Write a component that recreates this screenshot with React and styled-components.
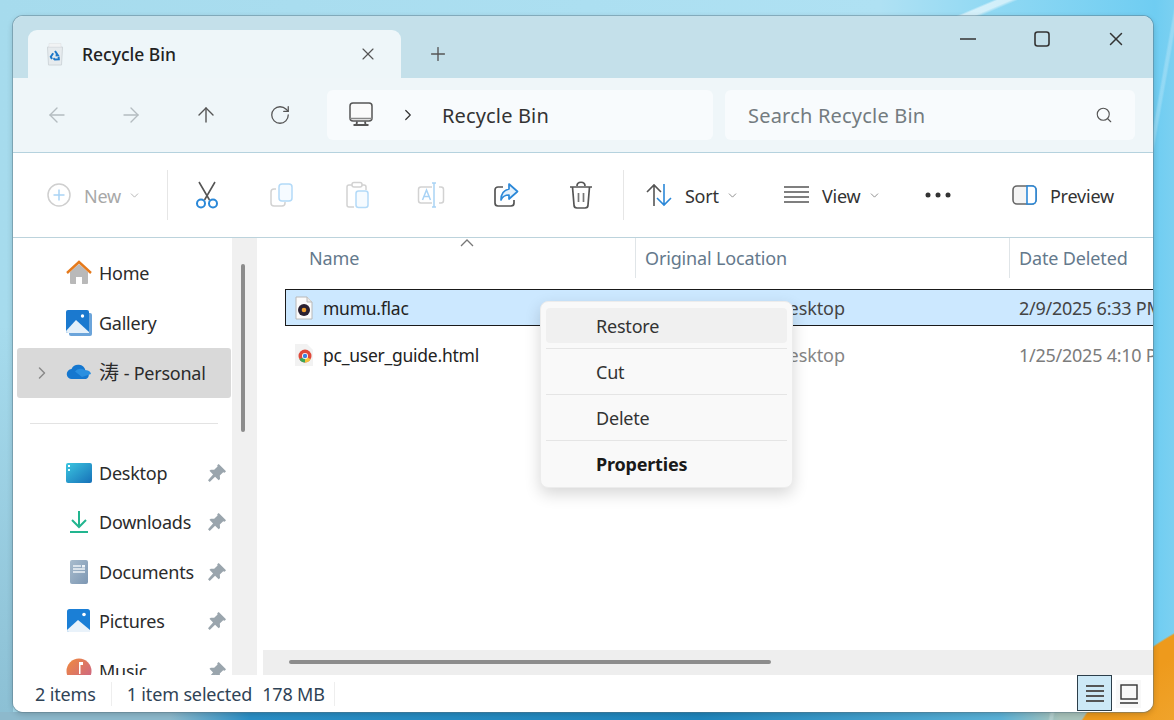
import React from 'react';
import styled, { createGlobalStyle } from 'styled-components';
import {
  ArrowLeft,
  ArrowRight,
  ArrowUp,
  ChevronDown,
  ChevronRight,
  Plus,
  RotateCw,
  Search,
  X
} from 'lucide-react';

const GlobalStyle = createGlobalStyle`
  html, body {
    margin: 0;
    padding: 0;
  }
  body {
    font-family: "Noto Sans", "Open Sans", "Noto Sans CJK SC", sans-serif;
    color: #1f1f1f;
  }
  * {
    box-sizing: border-box;
  }
`;

const Desktop = styled.div`
  width: 1174px;
  height: 720px;
  overflow: hidden;
  padding: 16px 21px 8px 13px;
  background:
    linear-gradient(157deg, transparent 388px, rgba(255, 255, 255, 0.6) 390px 395px, transparent 398px) top / 100% 16px no-repeat,
    linear-gradient(100deg, transparent 1157px, rgba(255, 255, 255, 0.22) 1159px 1161px, transparent 1163px) right / 100% 100% no-repeat,
    radial-gradient(circle at 1300px 860px, #f7c662 0, #ee9a1c 240px, #ee9a1c 258px, rgba(238, 154, 28, 0) 260px),
    linear-gradient(90deg, #8db9cc 0 170px, #2a8fc6 250px, #1f86bd 700px, #5bb2d8 1000px, #a9c4bc 1060px) bottom / 100% 8px no-repeat,
    linear-gradient(180deg, transparent 45%, rgba(90, 140, 165, 0.35) 100%) left / 13px 100% no-repeat,
    linear-gradient(90deg, #a6dbed 0, #afe1f3 880px, #8ed8f3 1000px, #6fcdf2 1155px, #7bd0f1 100%);
`;

const Window = styled.div`
  position: relative;
  width: 1140px;
  height: 696px;
  border-radius: 10px;
  overflow: hidden;
  display: flex;
  flex-direction: column;
  background: #fff;
  box-shadow: 0 0 0 1px rgba(90, 120, 135, 0.45), 0 2px 6px rgba(0, 0, 0, 0.2);
`;

const TitleBar = styled.div`
  height: 62px;
  flex: none;
  display: flex;
  align-items: flex-end;
  padding-left: 15px;
  background: #c4e0ea;
`;

const Tab = styled.div`
  width: 373px;
  height: 48px;
  display: flex;
  align-items: center;
  padding: 0 23px 0 18px;
  background: #eef6f9;
  border-radius: 9px 9px 0 0;
  font-size: 17.5px;
  font-weight: 500;
  color: #222;
`;

const TabTitle = styled.span`
  margin-left: 18px;
  flex: 1;
`;

const NewTab = styled.div`
  width: 74px;
  height: 48px;
  display: flex;
  align-items: center;
  justify-content: center;
  color: #555;
`;

const WindowControls = styled.div`
  margin-left: auto;
  align-self: flex-start;
  display: flex;
`;

const WindowControl = styled.div`
  width: 74px;
  height: 46px;
  display: flex;
  align-items: center;
  justify-content: center;
  color: #333;
`;

const AddressRow = styled.div`
  height: 75px;
  flex: none;
  display: flex;
  align-items: flex-start;
  padding: 12px 0 0 7px;
  background: #eff6f9;
  border-bottom: 1px solid #b5d2de;
`;

const NavButton = styled.div`
  width: 74.25px;
  height: 50px;
  display: flex;
  align-items: center;
  justify-content: center;
  color: ${(p) => (p.$off ? '#b4bcc0' : '#555')};
`;

const AddressBox = styled.div`
  margin-left: 10px;
  width: 386px;
  height: 50px;
  display: flex;
  align-items: center;
  padding-left: 22px;
  background: #f8fbfd;
  border-radius: 6px;
  font-size: 20px;
  letter-spacing: 0.15px;
  color: #333;
`;

const CrumbArrow = styled.div`
  margin-left: 26px;
  display: flex;
`;

const Crumb = styled.span`
  margin-left: 25px;
`;

const SearchBox = styled.div`
  margin-left: 12px;
  width: 410px;
  height: 50px;
  display: flex;
  align-items: center;
  justify-content: space-between;
  padding: 0 22px 0 23px;
  background: #f8fbfd;
  border-radius: 6px;
  font-size: 20px;
  letter-spacing: 0.2px;
  color: #737b80;
`;

const Toolbar = styled.div`
  height: 85px;
  flex: none;
  display: flex;
  align-items: center;
  padding-left: 34px;
  background: #fff;
  border-bottom: 1px solid #bcd3dc;
  font-size: 18px;
  letter-spacing: -0.2px;
  color: #333;
`;

const ToolGroup = styled.div`
  width: ${(p) => p.$width}px;
  flex: none;
  display: flex;
  align-items: center;
  color: ${(p) => (p.$off ? '#a8a8a8' : 'inherit')};
  svg {
    flex: none;
  }
`;

const ToolLabel = styled.span`
  margin: 0 7px 0 13px;
  padding-top: 2px;
`;

const ToolDivider = styled.div`
  width: 1px;
  height: 50px;
  flex: none;
  background: #e6e6e6;
  margin: 0 ${(p) => p.$right}px 0 ${(p) => p.$left}px;
`;

const ToolButton = styled.div`
  width: 74.7px;
  flex: none;
  display: flex;
  justify-content: center;
`;

const Body = styled.div`
  flex: 1;
  min-height: 0;
  display: flex;
`;

const Sidebar = styled.nav`
  width: 219px;
  flex: none;
  padding: 10px 0 0 4px;
  overflow: hidden;
`;

const NavRow = styled.div`
  width: 214px;
  height: ${(p) => (p.$tight ? 49.5 : 50)}px;
  display: flex;
  align-items: center;
  padding-right: 5px;
  border-radius: 3px;
  background: ${(p) => (p.$active ? '#d9d9d9' : 'transparent')};
  font-size: 18px;
  letter-spacing: -0.25px;
  color: #2b2b2b;
`;

const Expander = styled.div`
  width: 13px;
  flex: none;
  margin: 0 18px;
  display: flex;
  justify-content: center;
  color: #8a8a8a;
  svg {
    flex: none;
  }
`;

const NavIcon = styled.div`
  width: 26px;
  height: 26px;
  flex: none;
  margin-right: 7px;
  display: flex;
  align-items: center;
`;

const CjkName = styled.span`
  font-size: 20px;
  line-height: 1;
  margin-right: 5px;
`;

const Pin = styled.div`
  margin-left: auto;
  width: 18px;
  height: 18px;
  display: flex;
`;

const NavDivider = styled.div`
  height: 50px;
  display: flex;
  align-items: center;
  padding: 0 14px 0 13px;
  &::after {
    content: '';
    flex: 1;
    height: 1px;
    background: #e3e3e3;
  }
`;

const ScrollTrack = styled.div`
  width: 25px;
  flex: none;
  padding: 26px 0 0 9px;
  background: #f0f0f0;
`;

const ScrollThumb = styled.div`
  width: 4px;
  height: 168px;
  border-radius: 2px;
  background: #8c8c8c;
`;

const Main = styled.div`
  flex: 1;
  min-width: 0;
  display: flex;
  flex-direction: column;
  overflow: hidden;
  font-size: 17.5px;
  letter-spacing: -0.25px;
`;

const HeaderRow = styled.div`
  position: relative;
  height: 40px;
  flex: none;
  display: flex;
  font-size: 18px;
  letter-spacing: -0.15px;
  color: #64798c;
`;

const HeaderCell = styled.div`
  width: ${(p) => p.$width}px;
  flex: none;
  display: flex;
  align-items: center;
  padding-left: ${(p) => p.$pad}px;
  border-right: ${(p) => (p.$last ? 'none' : '1px solid #e0e5e8')};
  white-space: nowrap;
`;

const SortCaret = styled.svg`
  position: absolute;
  left: 203px;
  top: 1px;
`;

const FileRow = styled.div`
  margin: ${(p) => (p.$selected ? 11 : 10)}px 0 0 28px;
  width: 868px;
  height: 37px;
  flex: none;
  display: flex;
  align-items: center;
  white-space: nowrap;
  overflow: hidden;
  background: ${(p) => (p.$selected ? '#cce8ff' : 'transparent')};
  border: ${(p) => (p.$selected ? '1px solid #1a1a1a' : '1px solid transparent')};
  border-right: none;
`;

const FileName = styled.div`
  width: 359px;
  flex: none;
  display: flex;
  align-items: center;
  gap: 9px;
  padding-left: 8px;
  color: #222;
`;

const FileLocation = styled.div`
  width: 374px;
  flex: none;
  font-size: 18px;
  letter-spacing: -0.1px;
  color: ${(p) => (p.$muted ? '#858585' : '#444')};
`;

const FileDate = styled.div`
  flex: none;
  font-size: 18px;
  color: ${(p) => (p.$muted ? '#7c7c7c' : '#444')};
`;

const HScroll = styled.div`
  margin: auto 0 0 6px;
  height: 25px;
  flex: none;
  padding: 10px 0 0 26px;
  background: #eeeeee;
`;

const HThumb = styled.div`
  width: 482px;
  height: 3.5px;
  border-radius: 2px;
  background: #8c8c8c;
`;

const StatusBar = styled.div`
  height: 37px;
  flex: none;
  display: flex;
  align-items: center;
  padding: 0 12px 0 22px;
  font-size: 18px;
  letter-spacing: -0.15px;
  color: #2f4356;
  background: #fff;
`;

const StatusText = styled.span`
  margin-left: ${(p) => p.$gap || 0}px;
`;

const StatusDivider = styled.div`
  width: 1px;
  height: 24px;
  background: #eeeeee;
  margin: 0 ${(p) => p.$right}px 0 ${(p) => p.$left}px;
`;

const ViewButtons = styled.div`
  margin-left: auto;
  align-self: flex-start;
  display: flex;
  align-items: flex-start;
  gap: 4px;
`;

const ViewButton = styled.div`
  width: ${(p) => (p.$active ? 35 : 25)}px;
  height: ${(p) => (p.$active ? 36 : 28)}px;
  margin-top: ${(p) => (p.$active ? 0 : 5)}px;
  display: flex;
  align-items: center;
  justify-content: center;
  background: ${(p) => (p.$active ? '#cce8f6' : '#f8f8f8')};
  border: ${(p) => (p.$active ? '1px solid #2c3e4a' : 'none')};
`;

const ContextMenu = styled.div`
  position: absolute;
  left: 527px;
  top: 285px;
  width: 253px;
  height: 187px;
  padding: 6px 5px;
  background: #f9f9f9;
  border: 1px solid #ececec;
  border-radius: 8px;
  box-shadow: 0 6px 16px rgba(0, 0, 0, 0.16);
  font-size: 18px;
  letter-spacing: -0.2px;
  color: #333;
`;

const MenuItem = styled.div`
  height: 35px;
  display: flex;
  align-items: center;
  padding-left: 50px;
  border-radius: 4px;
  background: ${(p) => (p.$hover ? '#f0f0f0' : 'transparent')};
  font-weight: ${(p) => (p.$strong ? 700 : 400)};
  color: ${(p) => (p.$strong ? '#1a1a1a' : '#333')};
`;

const MenuDivider = styled.div`
  height: 1px;
  margin: 5px 0;
  background: #e5e5e5;
`;

const RecycleIcon = () => (
  <svg width="18" height="24" viewBox="0 0 18 24">
    <path d="M1.500 5h15l-1 18h-13z" fill="#e6ebee" stroke="#cfd6da" />
    <path d="M3 1.500h12v3.500H3z" fill="#f1f3f4" stroke="#dfe3e5" strokeWidth="0.6" />
    <path d="M9 9l2.800 4.200-2.200.2M6 17l-1.200-2.200 2.400-3.600M12.600 14.600l.2 2.600-4 .2-1.400-1.200" fill="none" stroke="#1e78c8" strokeWidth="2" />
  </svg>
);

const MonitorIcon = () => (
  <svg width="24" height="26" viewBox="0 0 24 26" fill="none" stroke="#555" strokeWidth="1.5">
    <rect x="1" y="1" width="22" height="18" rx="3" fill="#fafafa" />
    <path d="M1 16.500h22" stroke="#888" />
    <path d="M8 19.500l-.5 3M16 19.500l.5 3M4.500 23h15" strokeWidth="1.800" />
  </svg>
);

const NewIcon = () => (
  <svg width="24" height="24" viewBox="0 0 24 24" fill="none">
    <circle cx="12" cy="12" r="11" stroke="#cfcfcf" strokeWidth="1.500" />
    <path d="M12 6.500v11M6.500 12h11" stroke="#a9d3f5" strokeWidth="1.500" />
  </svg>
);

const CutIcon = () => (
  <svg width="24" height="28" viewBox="0 0 24 28" fill="none" strokeWidth="1.600">
    <path d="M4 1l10.500 18M20 1L9.500 19" stroke="#555" />
    <circle cx="6" cy="22.500" r="4" stroke="#2b88d8" strokeWidth="2" />
    <circle cx="18" cy="22.500" r="4" stroke="#2b88d8" strokeWidth="2" />
  </svg>
);

const CopyIcon = () => (
  <svg width="26" height="26" viewBox="0 0 26 26" fill="none" strokeWidth="1.500">
    <path d="M7 7H5a3 3 0 0 0-3 3v11a3 3 0 0 0 3 3h8a3 3 0 0 0 3-3v-1" stroke="#d2d2d2" />
    <rect x="10" y="2" width="13" height="17" rx="3" stroke="#b3daf8" fill="#f6fbff" />
  </svg>
);

const PasteIcon = () => (
  <svg width="26" height="28" viewBox="0 0 26 28" fill="none" strokeWidth="1.500">
    <path d="M8 4H5a2 2 0 0 0-2 2v18a2 2 0 0 0 2 2h5M18 4h2a2 2 0 0 1 2 2v3" stroke="#d2d2d2" />
    <rect x="8" y="1.500" width="10" height="4.500" rx="2" stroke="#d2d2d2" />
    <rect x="12" y="10" width="12" height="16.500" rx="2.500" stroke="#b3daf8" fill="#f6fbff" />
  </svg>
);

const RenameIcon = () => (
  <svg width="28" height="28" viewBox="0 0 28 28" fill="none" strokeWidth="1.500">
    <path d="M15 6H4a2.500 2.500 0 0 0-2.500 2.500v11A2.500 2.500 0 0 0 4 22h11M22 6h2a2.500 2.500 0 0 1 2.500 2.500v11A2.500 2.500 0 0 1 24 22h-2" stroke="#d2d2d2" />
    <path d="M15 2h4M15 26h4M17 2v24" stroke="#a9d3f5" />
    <path d="M5.500 19l4-10 4 10M7 15.500h5" stroke="#a9d3f5" />
  </svg>
);

const ShareIcon = () => (
  <svg width="26" height="26" viewBox="0 0 26 26" fill="none" strokeWidth="1.700">
    <path d="M10 5H5a3 3 0 0 0-3 3v13a3 3 0 0 0 3 3h13a3 3 0 0 0 3-3v-3" stroke="#555" />
    <path d="M16 2l8.500 7.500L16 17v-4c-4 0-6.500 1.500-8 5 0-6 3-10 8-11z" stroke="#2b88d8" fill="#e4f1fc" strokeLinejoin="round" />
  </svg>
);

const TrashIcon = () => (
  <svg width="24" height="28" viewBox="0 0 24 28" fill="none" stroke="#555" strokeWidth="1.700">
    <path d="M1 6h22M8 5c0-5 8-5 8 0" />
    <path d="M3.500 6l1.500 18a3 3 0 0 0 3 3h8a3 3 0 0 0 3-3l1.500-18" />
    <path d="M9.500 12v9M14.500 12v9" stroke="#777" />
  </svg>
);

const SortIcon = () => (
  <svg width="26" height="24" viewBox="0 0 26 24" fill="none" strokeWidth="1.600">
    <path d="M8 23V2M1 9l7-7 7 7" stroke="#555" />
    <path d="M18 1v21M11 15l7 7 7-7" stroke="#2b88d8" />
  </svg>
);

const ViewIcon = () => (
  <svg width="25" height="18" viewBox="0 0 25 18" stroke="#555" strokeWidth="1.400">
    <path d="M0 1h25M0 6h25M0 11h25M0 16h25" />
  </svg>
);

const MoreIcon = () => (
  <svg width="26" height="6" viewBox="0 0 26 6" fill="#333">
    <circle cx="3" cy="3" r="2.500" />
    <circle cx="13" cy="3" r="2.500" />
    <circle cx="23" cy="3" r="2.500" />
  </svg>
);

const PreviewIcon = () => (
  <svg width="25" height="20" viewBox="0 0 25 20" fill="none" strokeWidth="1.600">
    <rect x="1" y="1" width="23" height="18" rx="4" fill="#f4f4f4" stroke="#666" />
    <path d="M15 1h5a4 4 0 0 1 4 4v10a4 4 0 0 1-4 4h-5z" fill="#fff" stroke="#2b88d8" />
  </svg>
);

const HomeIcon = () => (
  <svg width="26" height="26" viewBox="0 0 26 26">
    <path d="M4 12L13 4l9 8v11a1 1 0 0 1-1 1h-5v-7h-6v7H5a1 1 0 0 1-1-1z" fill="#b9b9b9" />
    <path d="M1 13L13 2l12 11" fill="none" stroke="#e57a1c" strokeWidth="2.400" />
  </svg>
);

const GalleryIcon = () => (
  <svg width="26" height="26" viewBox="0 0 26 26">
    <rect x="3" y="3" width="23" height="23" rx="2" fill="#6ba4da" />
    <rect x="0" y="0" width="23" height="23" rx="2" fill="#1b79cf" />
    <path d="M0 21l10-11 13 12v1H2a2 2 0 0 1-2-2z" fill="#e4f0fa" />
    <circle cx="16.500" cy="6" r="1.700" fill="#fff" />
  </svg>
);

const CloudIcon = () => (
  <svg width="26" height="26" viewBox="0 0 26 26">
    <path d="M6 19a5 5 0 0 1-.5-10 7.500 7.500 0 0 1 14 1.500 4.500 4.500 0 0 1 .5 8.500z" fill="#1577cf" />
    <path d="M9 11.500A7.500 7.500 0 0 1 19.500 10.500 4.500 4.500 0 0 1 25 14l-9 3z" fill="#2a8fe0" />
  </svg>
);

const DesktopIcon = () => (
  <svg width="26" height="22" viewBox="0 0 26 22">
    <defs>
      <linearGradient id="dg" x1="0" y1="0" x2="1" y2="1">
        <stop offset="0" stopColor="#3cc6e0" />
        <stop offset="1" stopColor="#1670b8" />
      </linearGradient>
    </defs>
    <rect x="0" y="1" width="26" height="20" rx="2" fill="url(#dg)" />
    <rect x="2" y="3" width="2" height="2" fill="#fff" />
    <rect x="2" y="7" width="2" height="2" fill="#dff" />
  </svg>
);

const DownloadIcon = () => (
  <svg width="26" height="26" viewBox="0 0 26 26" fill="none" stroke="#22b58f" strokeWidth="2">
    <path d="M13 2v15M6 11l7 7 7-7M4 23h18" />
  </svg>
);

const DocumentIcon = () => (
  <svg width="26" height="26" viewBox="0 0 26 26">
    <defs>
      <linearGradient id="doc" x1="0" y1="0" x2="1" y2="1">
        <stop offset="0" stopColor="#a8bccd" />
        <stop offset="1" stopColor="#7d97b3" />
      </linearGradient>
    </defs>
    <rect x="4" y="1" width="18" height="24" rx="2" fill="url(#doc)" />
    <path d="M7 7h8M7 10h12M7 13h12" stroke="#eef3f7" strokeWidth="1.300" />
    <rect x="16" y="6" width="3" height="2.500" fill="#eef3f7" />
  </svg>
);

const PictureIcon = () => (
  <svg width="26" height="26" viewBox="0 0 26 26">
    <rect x="1" y="1" width="23" height="23" rx="2.500" fill="#1b7fd6" />
    <path d="M1 22l11-10 12 10v2H3a2 2 0 0 1-2-2z" fill="#e9f2fa" />
    <circle cx="18" cy="6.500" r="1.800" fill="#fff" />
  </svg>
);

const MusicIcon = () => (
  <svg width="26" height="26" viewBox="0 0 26 26">
    <defs>
      <linearGradient id="mus" x1="0" y1="0" x2="1" y2="1">
        <stop offset="0" stopColor="#f08a3c" />
        <stop offset="1" stopColor="#c9628e" />
      </linearGradient>
    </defs>
    <circle cx="13" cy="13" r="12.500" fill="url(#mus)" />
    <path d="M13 4h4v3h-2.500v9h-1.500z" fill="#fff" />
  </svg>
);

const PinIcon = () => (
  <svg width="18" height="18" viewBox="0 0 16 16" fill="#9aa5ad">
    <path d="M9.500 0L16 6.500l-1.200 1.200-1.300-.4-3 3 .2 3-1.200 1.200-3.200-3.200L1.500 16 0 14.500l4.500-5.200L1.300 6.100 2.500 5l3 .2 3-3-.3-1z" />
  </svg>
);

const FlacIcon = () => (
  <svg width="20" height="24" viewBox="0 0 20 24">
    <path d="M2 1h11l5 5v17H2z" fill="#fbfbfb" stroke="#b8b8b8" />
    <path d="M13 1v5h5" fill="#e8e8e8" stroke="#b8b8b8" />
    <circle cx="10" cy="14" r="6" fill="#2a2030" />
    <circle cx="10" cy="14" r="2.300" fill="#f0a030" />
  </svg>
);

const HtmlIcon = () => (
  <svg width="20" height="24" viewBox="0 0 20 24">
    <path d="M1 1h12l6 6v16H1z" fill="#f2f2f2" />
    <circle cx="11" cy="13" r="6.500" fill="#e0493a" />
    <path d="M11 13L5.400 16.200A6.500 6.500 0 0 0 11 19.500z" fill="#3aa757" />
    <path d="M11 13l5.600 3.200A6.500 6.500 0 0 1 11 19.500z" fill="#f5c33b" />
    <circle cx="11" cy="13" r="3" fill="#fff" />
    <circle cx="11" cy="13" r="2.200" fill="#3b82e0" />
  </svg>
);

const MinimizeIcon = () => (
  <svg width="16" height="16" viewBox="0 0 16 16" stroke="#333" strokeWidth="1.600">
    <path d="M0 8h16" />
  </svg>
);

const MaximizeIcon = () => (
  <svg width="16" height="16" viewBox="0 0 16 16" fill="none" stroke="#333" strokeWidth="1.600">
    <rect x="1" y="1" width="14" height="14" rx="2.500" />
  </svg>
);

const DetailsIcon = () => (
  <svg width="18" height="18" viewBox="0 0 18 18" stroke="#555" strokeWidth="2">
    <path d="M0 2h18M0 7h18M0 12h18M0 17h18" />
  </svg>
);

const TilesIcon = () => (
  <svg width="18" height="20" viewBox="0 0 18 20" fill="none" stroke="#333" strokeWidth="1.400">
    <rect x="1" y="1" width="16" height="14" />
    <path d="M0 19h18" />
  </svg>
);

const quickAccess = [
  { name: 'Desktop', icon: <DesktopIcon /> },
  { name: 'Downloads', icon: <DownloadIcon /> },
  { name: 'Documents', icon: <DocumentIcon /> },
  { name: 'Pictures', icon: <PictureIcon /> },
  { name: 'Music', icon: <MusicIcon /> }
];

const App = () => {
  return (
    <Desktop>
      <GlobalStyle />
      <Window>
        <TitleBar>
          <Tab>
            <RecycleIcon />
            <TabTitle>Recycle Bin</TabTitle>
            <X size={20} strokeWidth={1.4} color="#555" />
          </Tab>
          <NewTab>
            <Plus size={22} strokeWidth={1.5} />
          </NewTab>
          <WindowControls>
            <WindowControl>
              <MinimizeIcon />
            </WindowControl>
            <WindowControl>
              <MaximizeIcon />
            </WindowControl>
            <WindowControl>
              <X size={22} strokeWidth={1.6} />
            </WindowControl>
          </WindowControls>
        </TitleBar>

        <AddressRow>
          <NavButton $off>
            <ArrowLeft size={24} strokeWidth={1.4} />
          </NavButton>
          <NavButton $off>
            <ArrowRight size={24} strokeWidth={1.4} />
          </NavButton>
          <NavButton>
            <ArrowUp size={24} strokeWidth={1.4} />
          </NavButton>
          <NavButton>
            <RotateCw size={22} strokeWidth={1.4} />
          </NavButton>
          <AddressBox>
            <MonitorIcon />
            <CrumbArrow>
              <ChevronRight size={18} strokeWidth={1.6} />
            </CrumbArrow>
            <Crumb>Recycle Bin</Crumb>
          </AddressBox>
          <SearchBox>
            Search Recycle Bin
            <Search size={18} strokeWidth={1.5} color="#555" />
          </SearchBox>
        </AddressRow>

        <Toolbar>
          <ToolGroup $width={120} $off>
            <NewIcon />
            <ToolLabel>New</ToolLabel>
            <ChevronDown size={13} strokeWidth={1.5} />
          </ToolGroup>
          <ToolDivider $left={0} $right={2} />
          <ToolButton>
            <CutIcon />
          </ToolButton>
          <ToolButton>
            <CopyIcon />
          </ToolButton>
          <ToolButton>
            <PasteIcon />
          </ToolButton>
          <ToolButton>
            <RenameIcon />
          </ToolButton>
          <ToolButton>
            <ShareIcon />
          </ToolButton>
          <ToolButton>
            <TrashIcon />
          </ToolButton>
          <ToolDivider $left={4.8} $right={22} />
          <ToolGroup $width={138}>
            <SortIcon />
            <ToolLabel>Sort</ToolLabel>
            <ChevronDown size={13} strokeWidth={1.5} color="#777" />
          </ToolGroup>
          <ToolGroup $width={141}>
            <ViewIcon />
            <ToolLabel>View</ToolLabel>
            <ChevronDown size={13} strokeWidth={1.5} color="#777" />
          </ToolGroup>
          <ToolGroup $width={87}>
            <MoreIcon />
          </ToolGroup>
          <ToolGroup $width={110}>
            <PreviewIcon />
            <ToolLabel>Preview</ToolLabel>
          </ToolGroup>
        </Toolbar>

        <Body>
          <Sidebar>
            <NavRow>
              <Expander />
              <NavIcon>
                <HomeIcon />
              </NavIcon>
              Home
            </NavRow>
            <NavRow>
              <Expander />
              <NavIcon>
                <GalleryIcon />
              </NavIcon>
              Gallery
            </NavRow>
            <NavRow $active>
              <Expander>
                <ChevronRight size={20} strokeWidth={1.8} />
              </Expander>
              <NavIcon>
                <CloudIcon />
              </NavIcon>
              <CjkName>涛</CjkName>- Personal
            </NavRow>
            <NavDivider />
            {quickAccess.map((item) => (
              <NavRow key={item.name} $tight>
                <Expander />
                <NavIcon>{item.icon}</NavIcon>
                {item.name}
                <Pin>
                  <PinIcon />
                </Pin>
              </NavRow>
            ))}
          </Sidebar>
          <ScrollTrack>
            <ScrollThumb />
          </ScrollTrack>
          <Main>
            <HeaderRow>
              <HeaderCell $width={379} $pad={52}>
                Name
              </HeaderCell>
              <HeaderCell $width={374} $pad={9}>
                Original Location
              </HeaderCell>
              <HeaderCell $width={143} $pad={9} $last>
                Date Deleted
              </HeaderCell>
              <SortCaret width="14" height="8" viewBox="0 0 14 8" fill="none" stroke="#777" strokeWidth="1.300">
                <path d="M1 7l6-6 6 6" />
              </SortCaret>
            </HeaderRow>
            <FileRow $selected>
              <FileName>
                <FlacIcon />
                mumu.flac
              </FileName>
              <FileLocation>C:\Users\taolin\Desktop</FileLocation>
              <FileDate>2/9/2025 6:33 PM</FileDate>
            </FileRow>
            <FileRow>
              <FileName>
                <HtmlIcon />
                pc_user_guide.html
              </FileName>
              <FileLocation $muted>C:\Users\taolin\Desktop</FileLocation>
              <FileDate $muted>1/25/2025 4:10 PM</FileDate>
            </FileRow>
            <HScroll>
              <HThumb />
            </HScroll>
          </Main>
        </Body>

        <StatusBar>
          <StatusText>2 items</StatusText>
          <StatusDivider $left={15} $right={15} />
          <StatusText>1 item selected</StatusText>
          <StatusText $gap={10}>178 MB</StatusText>
          <StatusDivider $left={9} $right={0} />
          <ViewButtons>
            <ViewButton $active>
              <DetailsIcon />
            </ViewButton>
            <ViewButton>
              <TilesIcon />
            </ViewButton>
          </ViewButtons>
        </StatusBar>

        <ContextMenu>
          <MenuItem $hover>Restore</MenuItem>
          <MenuDivider />
          <MenuItem>Cut</MenuItem>
          <MenuDivider />
          <MenuItem>Delete</MenuItem>
          <MenuDivider />
          <MenuItem $strong>Properties</MenuItem>
        </ContextMenu>
      </Window>
    </Desktop>
  );
};

export default App;
